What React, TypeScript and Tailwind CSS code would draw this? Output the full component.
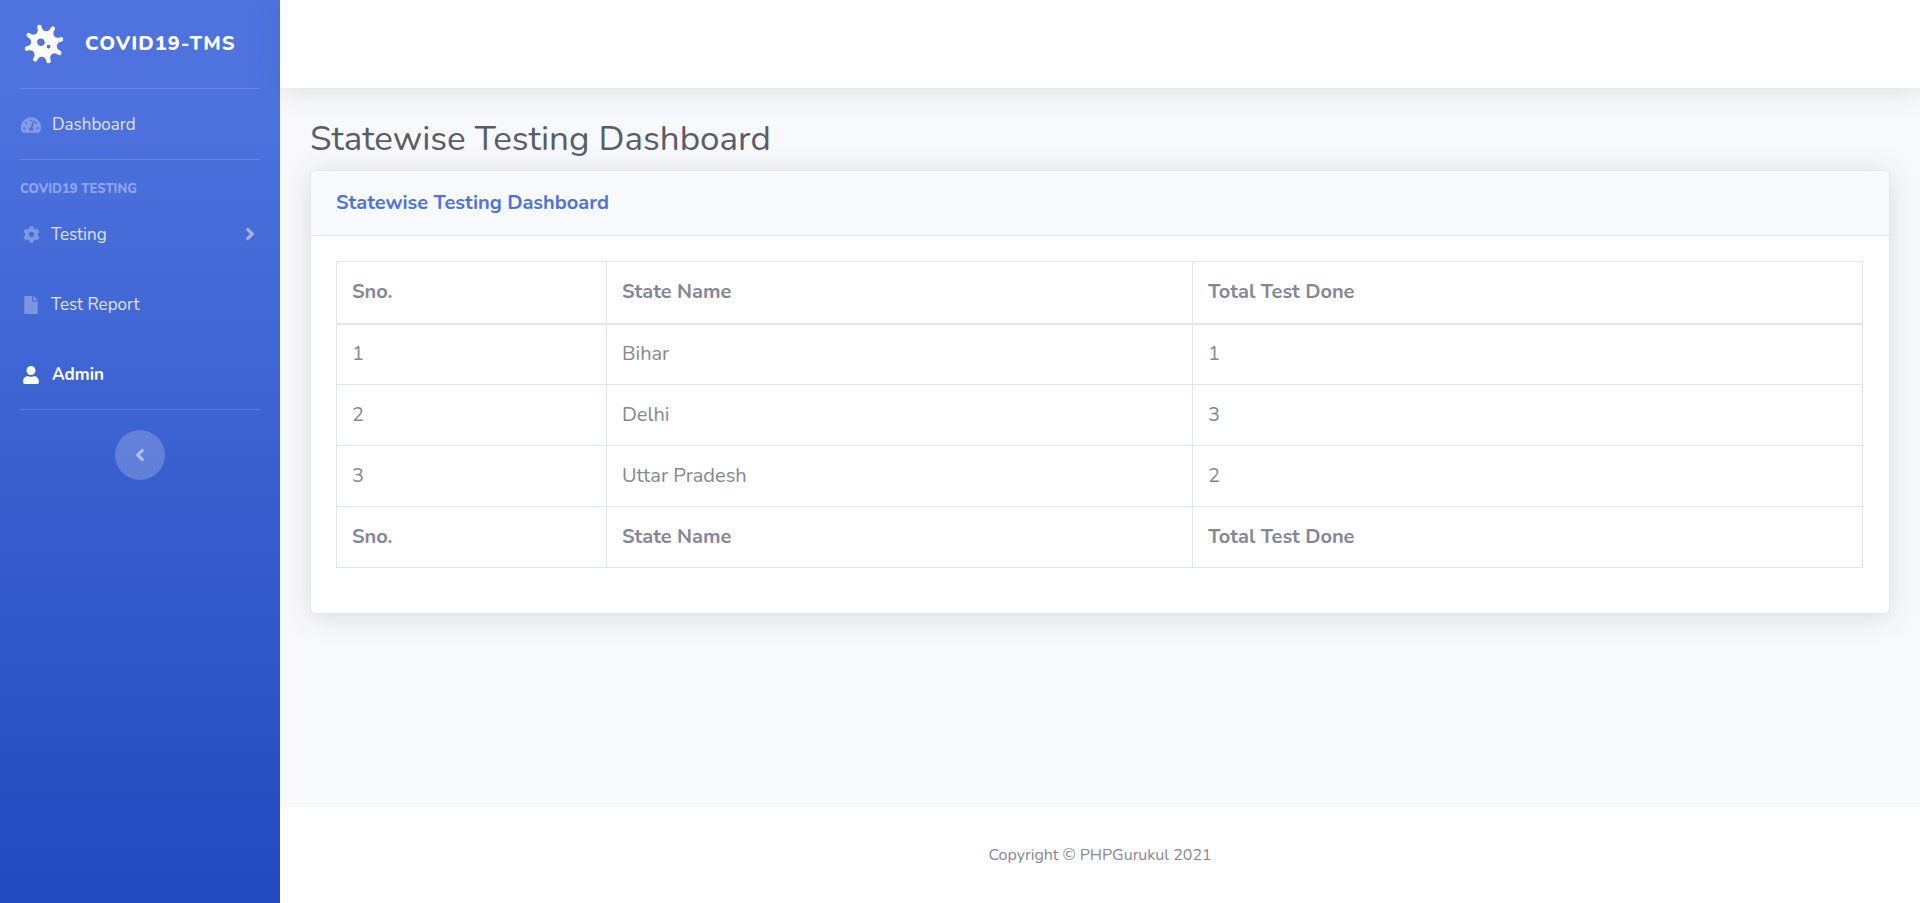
import { FaVirus, FaTachometerAlt, FaCog, FaAngleRight, FaAngleLeft, FaFile, FaUser } from 'react-icons/fa';

const font = "font-['Nunito','Noto_Sans','Open_Sans',sans-serif]";

function Divider() {
  return <hr className="mx-5 border-t border-white/15" />;
}

function Sidebar() {
  return (
    <aside className="w-[280px] shrink-0 bg-[linear-gradient(180deg,#4e73df_10%,#224abe_100%)] text-white flex flex-col">
      <div className="h-[88px] flex items-center pl-6 shrink-0">
        <FaVirus className="w-10 h-10 -rotate-[15deg] text-white" />
        <span className="ml-[21px] text-[20px] font-extrabold tracking-[0.05em]">COVID19-TMS</span>
      </div>
      <Divider />
      <a className="h-[70px] pt-px flex items-center pl-[21px] text-[17px] text-white/80">
        <FaTachometerAlt className="w-5 h-[18px] text-white/30" />
        <span className="ml-[11px]">Dashboard</span>
      </a>
      <Divider />
      <div className="mt-[21px] pl-5 text-[13px] leading-[16px] font-extrabold text-white/40 uppercase">Covid19 Testing</div>
      <a className="mt-[2px] h-[71px] flex items-center pl-[23px] pr-5 text-[17px] text-white/80">
        <FaCog className="w-[17px] h-[17px] text-white/30" />
        <span className="ml-[11px]">Testing</span>
        <FaAngleRight className="ml-auto mb-[2px] w-5 h-5 text-white/50" />
      </a>
      <a className="h-[70px] flex items-center pl-[24px] text-[17px] text-white/80">
        <FaFile className="w-[14px] h-[18px] text-white/30" />
        <span className="ml-[13px]">Test Report</span>
      </a>
      <a className="h-[69px] flex items-center pl-[23px] text-[17px] font-bold text-white">
        <FaUser className="w-4 h-[18px]" />
        <span className="ml-[13px]">Admin</span>
      </a>
      <Divider />
      <button className="mt-5 mx-auto w-[50px] h-[50px] rounded-full bg-white/20 flex items-center justify-center">
        <FaAngleLeft className="w-5 h-5 text-white/50" />
      </button>
    </aside>
  );
}

const rows = [
  ['1', 'Bihar', '1'],
  ['2', 'Delhi', '3'],
  ['3', 'Uttar Pradesh', '2'],
];

function Th({ children, thick }: { children: string; thick?: boolean }) {
  return (
    <th className={`border border-[#e3e6f0] px-[15px] text-left font-bold text-[20px] ${thick ? 'border-b-2 h-[62px]' : 'h-[61px]'}`}>{children}</th>
  );
}

function StatewiseTable() {
  return (
    <table className="w-full table-fixed border-collapse text-[#858796]">
      <colgroup>
        <col className="w-[270px]" />
        <col className="w-[586px]" />
        <col />
      </colgroup>
      <thead>
        <tr>
          <Th thick>Sno.</Th>
          <Th thick>State Name</Th>
          <Th thick>Total Test Done</Th>
        </tr>
      </thead>
      <tbody>
        {rows.map((row) => (
          <tr key={row[0]}>
            {row.map((cell, i) => (
              <td key={i} className="border border-[#e3e6f0] px-[15px] h-[61px] text-[20px]">{cell}</td>
            ))}
          </tr>
        ))}
      </tbody>
      <tfoot>
        <tr>
          <Th>Sno.</Th>
          <Th>State Name</Th>
          <Th>Total Test Done</Th>
        </tr>
      </tfoot>
    </table>
  );
}

export default function App() {
  return (
    <div className={`flex h-[903px] overflow-hidden bg-[#f8f9fc] ${font}`}>
      <Sidebar />
      <div className="flex-1 flex flex-col min-w-0">
        <header className="h-[88px] shrink-0 bg-white shadow-[0_2.4px_28px_0_rgba(58,59,69,0.15)]" />
        <main className="flex-1 pl-[30px] pr-[30px] pt-[30px]">
          <h1 className="text-[35px] leading-[42px] font-normal text-[#5a5c69] mb-[10px]">Statewise Testing Dashboard</h1>
          <section className="rounded-[5px] border border-[#e3e6f0] bg-white shadow-[0_2.4px_28px_0_rgba(58,59,69,0.15)]">
            <div className="h-[65px] flex items-center px-[25px] bg-[#f8f9fc] border-b border-[#e3e6f0] rounded-t-[5px]">
              <h6 className="text-[20px] font-bold text-[#4e73df]">Statewise Testing Dashboard</h6>
            </div>
            <div className="pl-[25px] pr-[26px] pt-[25px] pb-[45px]">
              <StatewiseTable />
            </div>
          </section>
        </main>
        <footer className="h-[96px] shrink-0 bg-white flex items-center justify-center text-[16px] text-[#858796]">
          Copyright © PHPGurukul 2021
        </footer>
      </div>
    </div>
  );
}
